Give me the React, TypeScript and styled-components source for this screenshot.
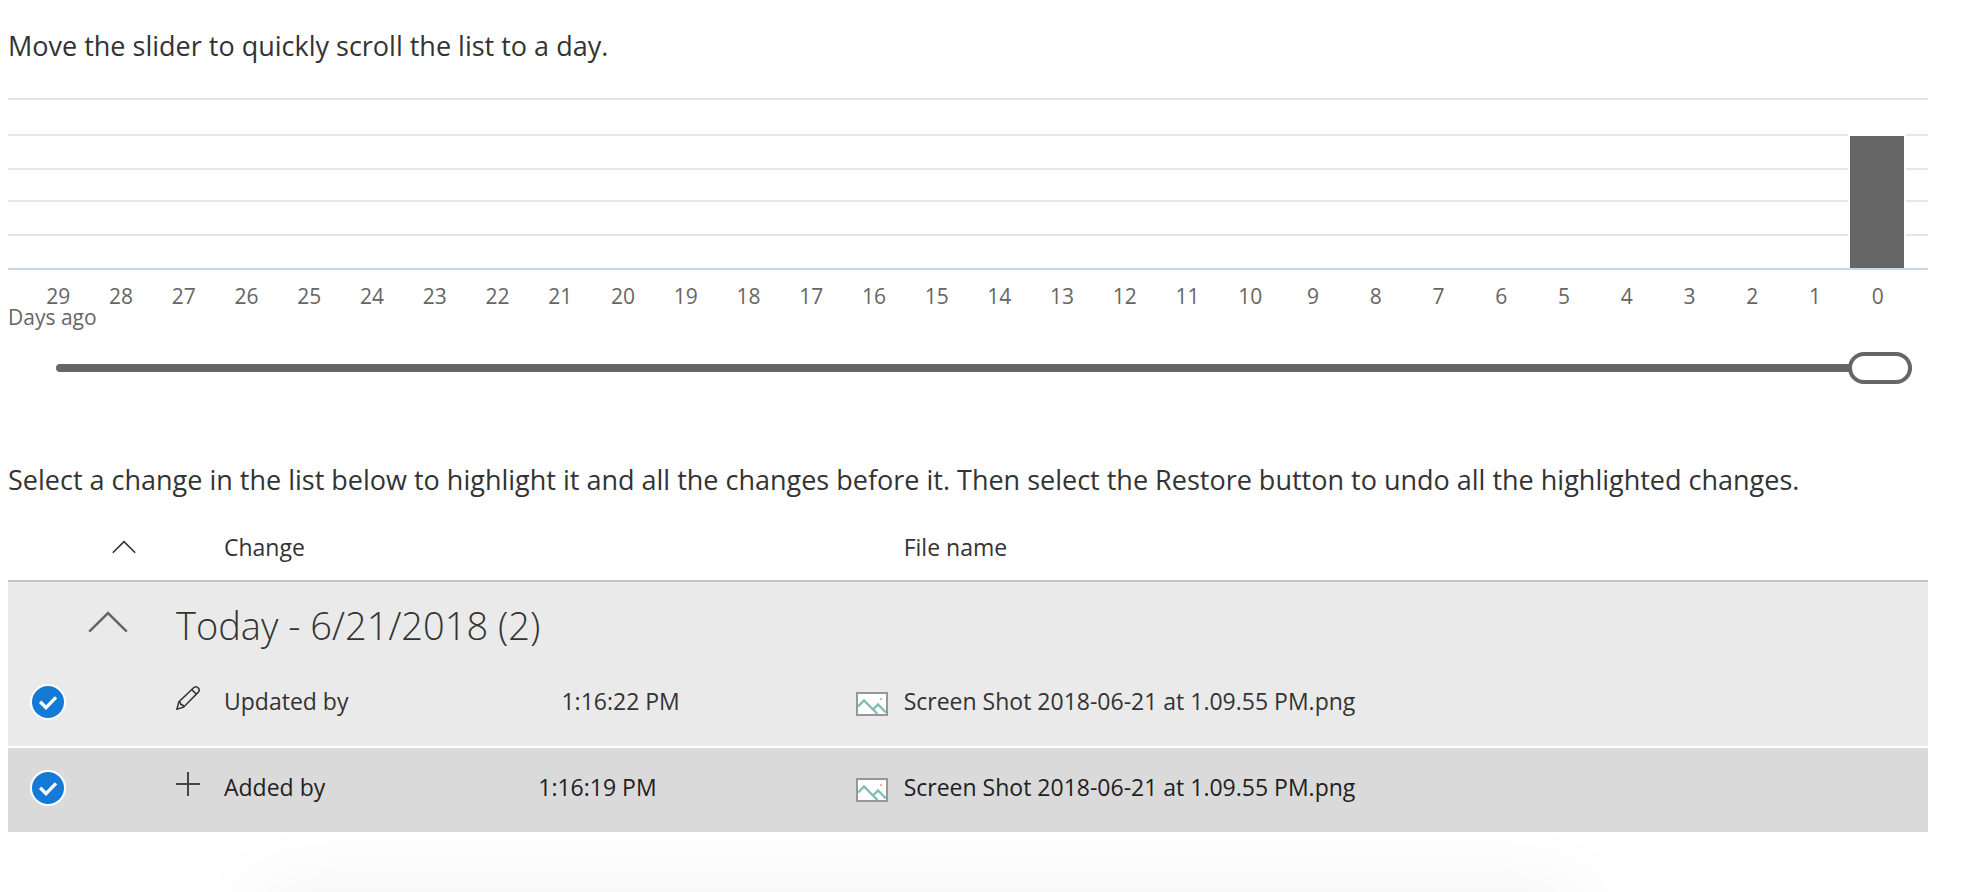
import React, { useState } from 'react';
import styled, { createGlobalStyle } from 'styled-components';

const GlobalStyle = createGlobalStyle`
  *, *::before, *::after { box-sizing: border-box; }
  body {
    margin: 0;
    background: #fff;
    color: #333;
    font-family: "Open Sans", "Noto Sans", sans-serif;
  }
`;

const Page = styled.div`
  display: flex;
  flex-direction: column;
  min-height: 100vh;
  overflow: hidden;
`;

const Content = styled.main`
  padding: 28px 50px 0 8px;
`;

const Instruction = styled.p`
  margin: 0;
  font-size: 27px;
  line-height: 36px;
`;

const Histogram = styled.figure`
  margin: 34px 0 0;
`;

const Plot = styled.div`
  display: grid;
`;

const GridLines = styled.div`
  grid-area: 1 / 1;
`;

const GridLine = styled.div<{ $height: number; $axis?: boolean }>`
  height: ${(p) => p.$height}px;
  border-bottom: 2px solid ${(p) => (p.$axis ? '#ccd6eb' : '#e6e6e6')};
`;

const DayColumns = styled.div`
  display: grid;
  grid-template-columns: repeat(30, minmax(0, 1fr));
  padding: 0 19px;
`;

const Bars = styled(DayColumns)`
  grid-area: 1 / 1;
  align-items: end;
  justify-items: center;
  padding: 0 20px 2px 19px;
`;

const Bar = styled.div<{ $count: number }>`
  width: 58px;
  height: ${(p) => p.$count * 67}px;
  background: #666;
  border: 2px solid #fff;
  border-bottom: 0;
`;

const DayLabels = styled(DayColumns)`
  margin-top: 16px;
  color: #666;
  font-size: 21px;
  line-height: 21px;
  text-align: center;
`;

const AxisTitle = styled.figcaption`
  color: #666;
  font-size: 21px;
  line-height: 21px;
`;

const SliderRow = styled.div`
  display: flex;
  padding: 24px 16px 78px 48px;
`;

const Slider = styled.input`
  flex: 1;
  min-width: 0;
  height: 32px;
  margin: 0;
  appearance: none;
  background: transparent;
  cursor: pointer;

  &::-webkit-slider-runnable-track {
    height: 8px;
    border-radius: 4px;
    background: #666;
  }

  &::-webkit-slider-thumb {
    appearance: none;
    width: 64px;
    height: 32px;
    margin-top: -12px;
    border: 4px solid #666;
    border-radius: 16px;
    background: #fff;
  }
`;

const ChangeTable = styled.table`
  width: 100%;
  margin-top: 22px;
  border-collapse: separate;
  border-spacing: 0;
  table-layout: fixed;
  font-size: 23px;
  line-height: 32px;
  text-align: left;
`;

const Column = styled.col<{ $width?: string }>`
  width: ${(p) => p.$width ?? 'auto'};
`;

const HeaderCell = styled.th<{ $indent?: number }>`
  height: 62px;
  padding: 0 0 6px ${(p) => p.$indent ?? 0}px;
  border-bottom: 2px solid #c6c6c6;
  font-weight: 400;
`;

const GroupRow = styled.tr`
  background: #eaeaea;
`;

const GroupCell = styled.td`
  height: 80px;
  padding: 0;
`;

const GroupTitle = styled.th`
  padding: 6px 0 0;
  font-size: 38px;
  font-weight: 300;
  line-height: 48px;
`;

const IconButton = styled.button`
  display: block;
  padding: 0;
  border: 0;
  background: none;
  color: inherit;
  cursor: pointer;
`;

const Cell = styled.td<{ $raise?: number; $indent?: number }>`
  height: 84px;
  padding: 0 0 ${(p) => p.$raise ?? 0}px ${(p) => p.$indent ?? 0}px;
`;

const TextCell = styled(Cell)`
  padding-bottom: 6px;
  white-space: nowrap;
`;

const ChangeRow = styled.tr<{ $anchor?: boolean }>`
  background: ${(p) => (p.$anchor ? '#dadada' : '#eaeaea')};
  color: ${(p) => (p.$anchor ? '#212121' : '#333')};

  &:not(:last-child) > td {
    height: 86px;
    border-bottom: 2px solid #fff;
  }
`;

const Time = styled.time`
  margin-left: 213px;
`;

const CheckLabel = styled.label`
  display: inline-grid;
  place-items: center;
  vertical-align: middle;
  cursor: pointer;

  > * { grid-area: 1 / 1; }
`;

const CheckInput = styled.input`
  appearance: none;
  width: 36px;
  height: 36px;
  margin: 0;
  border: 2px solid #fff;
  border-radius: 50%;
  background: #fff;

  &:checked { background: #147ad6; }
`;

const Icon = styled.svg`
  display: block;
  fill: none;
  stroke: currentColor;
  pointer-events: none;
`;

const Underlay = styled.footer`
  flex: 1 0 60px;
  height: 60px;
  overflow: hidden;
`;

const RestorePanel = styled.div`
  height: 40px;
  margin: 68px 20% 0 13%;
  box-shadow: 0 0 88px rgba(0, 0, 0, 0.09);
`;

const SortIcon = () => (
  <Icon width="24" height="14" viewBox="0 0 24 14" strokeWidth="1.6">
    <path d="M.8 12.8 12 1.6l11.2 11.2" />
  </Icon>
);

const CollapseIcon = () => (
  <Icon width="40" height="22" viewBox="0 0 40 22" strokeWidth="2.6">
    <path d="M1.2 20.6 20 2l18.8 18.6" stroke="#666" />
  </Icon>
);

const PencilIcon = () => (
  <Icon width="24" height="24" viewBox="0 0 24 24" strokeWidth="1.5">
    <path d="M.9 23.2 2.8 16 17.6 1.8c1.3-1.2 3.2-1.2 4.5 0 1.3 1.3 1.3 3.3 0 4.6L7.6 21.2.9 23.2Z" />
    <path d="m15.8 3.6 4.6 4.6M2.8 16c1.2.2 2 .8 2 2.6 1.7 0 2.6.9 2.8 2.6" />
  </Icon>
);

const PlusIcon = () => (
  <Icon width="24" height="24" viewBox="0 0 24 24" strokeWidth="2" strokeOpacity="0.8">
    <path d="M12 0v24M0 12h24" />
  </Icon>
);

const CheckIcon = () => (
  <Icon width="20" height="16" viewBox="0 0 20 16" strokeWidth="3.4">
    <path d="m2.200 7.8 5.800 5.800L18 3.400" stroke="#fff" />
  </Icon>
);

const PictureIcon = () => (
  <Icon width="32" height="24" viewBox="0 0 32 24" strokeWidth="2">
    <path d="M1 1h30v22H1z" fill="#fff" stroke="#979797" />
    <path d="m2 14.500 6-6L21.500 22M17.500 17l4.500-4.500 8 8" stroke="#82bcb4" strokeWidth="2.400" />
    <path d="M24 6h2v2h-2z" fill="#f4b29c" stroke="none" />
  </Icon>
);

const bands = [2, 36, 34, 32, 34, 34];
const days = Array.from({ length: 30 }, (_, i) => 29 - i);
const fileName = 'Screen Shot 2018-06-21 at 1.09.55 PM.png';
const changes = [
  { action: 'Updated by', time: '1:16:22 PM', icon: <PencilIcon /> },
  { action: 'Added by', time: '1:16:19 PM', icon: <PlusIcon /> },
];

export default function App() {
  const [day, setDay] = useState(29);
  const [anchor, setAnchor] = useState(1);

  return (
    <Page>
      <GlobalStyle />
      <Content>
        <Instruction>Move the slider to quickly scroll the list to a day.</Instruction>
        <Histogram>
          <Plot>
            <GridLines>
              {bands.map((height, i) => (
                <GridLine key={i} $height={height} $axis={i === bands.length - 1} />
              ))}
            </GridLines>
            <Bars>
              {days.map((d) => (d === 0 ? <Bar key={d} $count={changes.length} /> : <span key={d} />))}
            </Bars>
          </Plot>
          <DayLabels>
            {days.map((d) => (
              <span key={d}>{d}</span>
            ))}
          </DayLabels>
          <AxisTitle>Days ago</AxisTitle>
        </Histogram>
        <SliderRow>
          <Slider
            type="range"
            aria-label="Days ago"
            min={0}
            max={29}
            value={day}
            onChange={(e) => setDay(Number(e.target.value))}
          />
        </SliderRow>

        <Instruction>
          Select a change in the list below to highlight it and all the changes before it. Then
          select the Restore button to undo all the highlighted changes.
        </Instruction>
        <ChangeTable>
          <colgroup>
            <Column $width="80px" />
            <Column $width="88px" />
            <Column $width="48px" />
            <Column $width="32.9%" />
            <Column $width="48px" />
            <Column />
          </colgroup>
          <thead>
            <tr>
              <HeaderCell />
              <HeaderCell $indent={24}>
                <IconButton type="button" aria-label="Collapse all groups">
                  <SortIcon />
                </IconButton>
              </HeaderCell>
              <HeaderCell />
              <HeaderCell scope="col">Change</HeaderCell>
              <HeaderCell />
              <HeaderCell scope="col">File name</HeaderCell>
            </tr>
          </thead>
          <tbody>
            <GroupRow>
              <GroupCell />
              <GroupCell>
                <IconButton type="button" aria-label="Collapse group">
                  <CollapseIcon />
                </IconButton>
              </GroupCell>
              <GroupTitle colSpan={4} scope="rowgroup">
                Today - 6/21/2018 (2)
              </GroupTitle>
            </GroupRow>
            {changes.map((change, i) => (
              <ChangeRow key={change.time} $anchor={i === anchor}>
                <Cell $raise={4} $indent={22}>
                  <CheckLabel aria-label={`${change.action} ${change.time}`}>
                    <CheckInput type="checkbox" checked={i <= anchor} onChange={() => setAnchor(i)} />
                    <CheckIcon />
                  </CheckLabel>
                </Cell>
                <Cell />
                <Cell $raise={12}>{change.icon}</Cell>
                <TextCell>
                  {change.action}
                  <Time>{change.time}</Time>
                </TextCell>
                <Cell>
                  <PictureIcon />
                </Cell>
                <TextCell>{fileName}</TextCell>
              </ChangeRow>
            ))}
          </tbody>
        </ChangeTable>
      </Content>
      <Underlay>
        <RestorePanel />
      </Underlay>
    </Page>
  );
}
